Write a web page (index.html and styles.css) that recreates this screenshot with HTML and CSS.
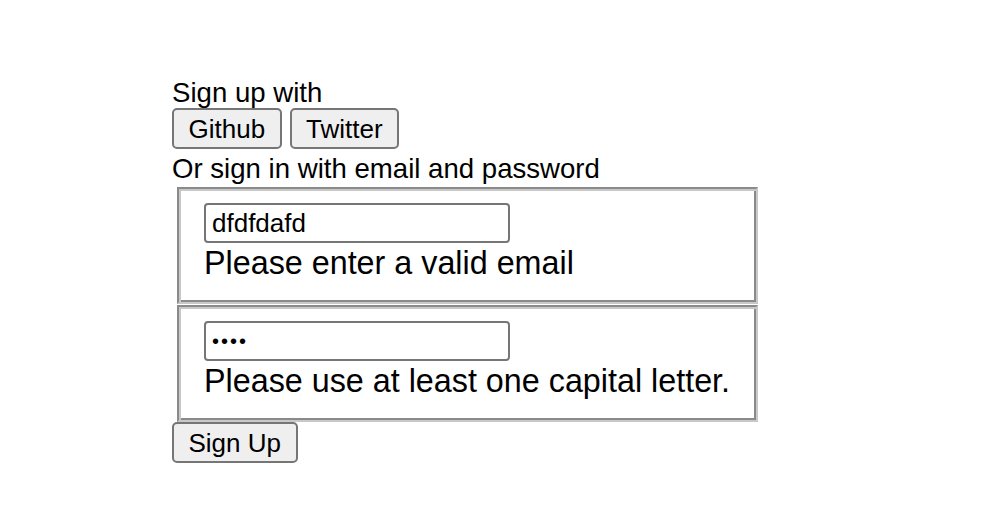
FILE: index.html
```html
<!DOCTYPE html>
<html>
<head>
<meta charset="utf-8">
<link rel="stylesheet" href="styles.css">
</head>
<body>
<div class="page">
  <div class="line">Sign up with</div>
  <div class="social">
    <button class="btn">Github</button>
    <button class="btn">Twitter</button>
  </div>
  <div class="line">Or sign in with email and password</div>
  <form class="form">
    <fieldset class="field">
      <input class="input" type="text" value="dfdfdafd">
      <div class="error">Please enter a valid email</div>
    </fieldset>
    <fieldset class="field">
      <input class="input pw" type="password" value="abcd">
      <div class="error">Please use at least one capital letter.</div>
    </fieldset>
    <button class="btn" type="button">Sign Up</button>
  </form>
</div>
</body>
</html>
```
FILE: styles.css
```css
html, body {
  margin: 0;
  padding: 0;
  background: #ffffff;
}
body {
  font-family: "Liberation Sans", Arial, Helvetica, sans-serif;
  color: #000;
}
.page {
  width: 590px;
  margin: 0;
  padding: 77px 0 0 172px;
  display: flex;
  flex-direction: column;
  align-items: flex-start;
}
.line {
  font-size: 27.6px;
  line-height: 31px;
  height: 31px;
}
.social {
  display: flex;
  gap: 8px;
  margin: 0 0 4px;
}
.btn {
  box-sizing: border-box;
  font-family: "Liberation Sans", Arial, Helvetica, sans-serif;
  font-size: 26px;
  line-height: 30px;
  height: 41px;
  padding: 0 14.5px;
  background: #efefef;
  border: 2px solid #767676;
  border-radius: 5px;
  color: #000;
}
.form {
  display: flex;
  flex-direction: column;
  align-items: flex-start;
  width: 590px;
  margin-top: 3px;
}
.field {
  box-sizing: border-box;
  width: 581px;
  height: 117px;
  margin: 0 5px 1px;
  padding: 14px 20px 10px 23px;
  border: 2px solid;
  border-color: #8a8a8a #c8c8c8 #c8c8c8 #8a8a8a;
  box-shadow: inset 2px 2px 0 #c8c8c8, inset -2px -2px 0 #8a8a8a;
  display: flex;
  flex-direction: column;
  align-items: flex-start;
  min-width: 0;
}
.field + .field {
  margin-bottom: 0;
}
.input {
  box-sizing: border-box;
  flex-shrink: 0;
  width: 306px;
  height: 40px;
  margin-left: 2px;
  padding: 0 6px;
  font-family: "Liberation Sans", Arial, Helvetica, sans-serif;
  font-size: 26px;
  border: 2px solid #767676;
  border-radius: 4px;
  background: #fff;
  color: #000;
  outline: none;
}
.input.pw {
  font-size: 20px;
  letter-spacing: 2px;
}
.error {
  flex-shrink: 0;
  font-size: 32.3px;
  line-height: 38px;
  margin-top: 1px;
  margin-left: 2px;
  white-space: nowrap;
}
```
